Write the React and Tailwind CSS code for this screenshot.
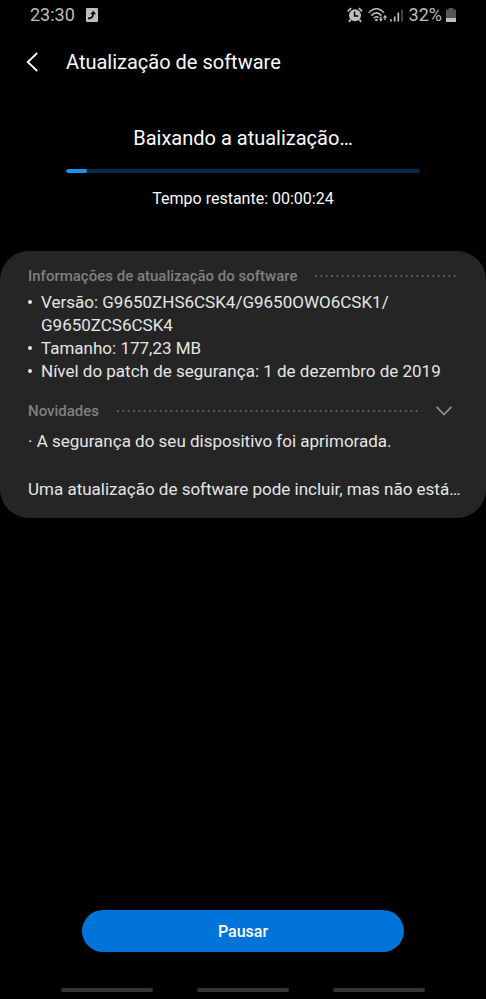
function DottedLine() {
  return (
    <svg className="h-1 min-w-0 flex-1 text-[#6c6c6c]" aria-hidden="true">
      <line x1="1" y1="2" x2="100%" y2="2" stroke="currentColor" strokeWidth="2" strokeLinecap="round" strokeDasharray="0 5.33" />
    </svg>
  );
}

function StatusBar() {
  return (
    <div className="flex h-[30px] items-center justify-between pr-[30px] pl-[30px] text-[#bdbdbd]">
      <div className="flex items-center gap-[11px]">
        <span className="text-[18px] leading-[30px]">23:30</span>
        <svg className="h-[14px] w-3" viewBox="0 0 12 14" aria-hidden="true">
          <rect width="12" height="14" rx="1" fill="currentColor" />
          <path d="M2 10.3H3.6Q7 10 7.2 5" fill="none" stroke="#000" strokeWidth="1.7" />
          <path d="M4.2 6.2L7.4 2.8L10.2 6.2Z" fill="#000" />
        </svg>
      </div>
      <div className="flex items-center">
        <svg className="h-4 w-4" viewBox="0 0 16 16" aria-hidden="true">
          <path d="M.8 4.4L4.2 1.2M15.2 4.4L11.8 1.2M3.8 12.6L1.8 14.8M12.2 12.6L14.2 14.8" stroke="currentColor" strokeWidth="1.8" />
          <circle cx="8" cy="8.2" r="6" fill="currentColor" />
          <path d="M7.6 4.4V9H11.2" fill="none" stroke="#000" strokeWidth="1.5" />
        </svg>
        <svg className="ml-[5px] h-4 w-[20px]" viewBox="0 0 20 16" fill="none" stroke="currentColor" aria-hidden="true">
          <path d="M.8 5.8Q8.4 -2.2 16 5.8M3.4 8.6Q8.4 3.2 13.4 8.6M5.9 11.2Q8.4 8.4 10.6 10.8" strokeWidth="1.6" />
          <circle cx="8.4" cy="13" r="1.3" fill="currentColor" stroke="none" />
          <path d="M12.9 9.5V13M17 13V9.5" strokeWidth="1.3" />
          <path d="M10.8 11.8H15L12.9 14.8ZM14.9 10.8H19.1L17 7.8Z" fill="currentColor" stroke="none" />
        </svg>
        <svg className="ml-[2px] h-4 w-[13px]" viewBox="0 0 13 16" aria-hidden="true">
          <path d="M1 12.2V14.6M4.7 9.4V14.6M8.3 5.6V14.6" stroke="currentColor" strokeWidth="1.7" />
          <path d="M12 2.4V14.6" stroke="#555555" strokeWidth="1.5" />
        </svg>
        <span className="ml-[6px] text-[18px] leading-[30px]">32%</span>
        <svg className="ml-1 h-[14px] w-[10px]" viewBox="0 0 10 14" aria-hidden="true">
          <path d="M0 1.4H2.6V0H7.4V1.4H10V10H0Z" fill="#555555" />
          <path d="M0 10H10V14H0Z" fill="currentColor" />
        </svg>
      </div>
    </div>
  );
}

function Detail({ children }) {
  return (
    <li className="flex gap-[9px]">
      <span className="mt-[9px] h-1 w-1 shrink-0 rounded-full bg-[#e4e4e4]" aria-hidden="true" />
      <span>{children}</span>
    </li>
  );
}

export default function App() {
  return (
    <div className="flex min-h-screen flex-col bg-black font-[Roboto,sans-serif] text-[#fafafa]">
      <StatusBar />

      <header className="flex h-16 items-center gap-6 px-6">
        <button type="button" aria-label="Voltar" className="flex h-5 w-[18px] items-center">
          <svg className="h-5 w-[18px]" viewBox="0 0 18 20" fill="none" stroke="currentColor" strokeWidth="1.9" aria-hidden="true">
            <path d="M13.2 1L3.8 10L13.2 19" />
          </svg>
        </button>
        <h1 className="text-[20px] leading-6">Atualização de software</h1>
      </header>

      <main className="flex flex-1 flex-col">
        <section className="flex flex-col items-center px-[66px] pt-8 pb-[41px]">
          <h2 className="text-[20px] leading-6">Baixando a atualização…</h2>
          <div role="progressbar" aria-valuenow={6} aria-valuemin={0} aria-valuemax={100} aria-label="Baixando a atualização" className="mt-[19px] h-1 w-full overflow-hidden rounded-full bg-[#06294a]">
            <div className="h-full w-[6%] rounded-full bg-[#1c92f0]" />
          </div>
          <p className="mt-[15px] text-[16px] leading-[22px]">Tempo restante: 00:00:24</p>
        </section>

        <section className="rounded-[29px] bg-[#252525] px-7 pt-[15px] pb-[17px] text-[17px] leading-6 text-[#e4e4e4]">
          <div className="flex h-5 items-center gap-[18px]">
            <h3 className="text-[15px] leading-5 font-medium text-[#808080]">Informações de atualização do software</h3>
            <DottedLine />
          </div>
          <ul className="mt-[5px] leading-[23px]">
            <Detail>Versão: G9650ZHS6CSK4/G9650OWO6CSK1/ G9650ZCS6CSK4</Detail>
            <Detail>Tamanho: 177,23 MB</Detail>
            <Detail>Nível do patch de segurança: 1 de dezembro de 2019</Detail>
          </ul>
          <div className="mt-[18px] flex h-5 items-center gap-[18px]">
            <h3 className="text-[15px] leading-5 font-medium text-[#808080]">Novidades</h3>
            <DottedLine />
            <button type="button" aria-label="Expandir novidades" className="mr-[6px] text-[#909090]">
              <svg className="h-[10px] w-4" viewBox="0 0 16 10" fill="none" stroke="currentColor" strokeWidth="1.8" aria-hidden="true">
                <path d="M.6 .8L8 8.5L15.4 .8" />
              </svg>
            </button>
          </div>
          <p className="mt-2">· A segurança do seu dispositivo foi aprimorada.</p>
          <p className="mt-6 -mr-3 truncate">Uma atualização de software pode incluir, mas não está…</p>
        </section>

        <div className="mt-auto px-[82px]">
          <button type="button" className="h-[42px] w-full rounded-full bg-[#0074d8] pt-[2px] text-[16px] leading-6 font-medium text-white">Pausar</button>
        </div>
      </main>

      <nav aria-label="Navegação do sistema" className="mt-9 flex justify-between px-[61px] pb-[7px]">
        <button type="button" aria-label="Recentes" className="h-1 w-[92px] rounded-full bg-[#353535]" />
        <button type="button" aria-label="Início" className="h-1 w-[92px] rounded-full bg-[#353535]" />
        <button type="button" aria-label="Retroceder" className="h-1 w-[92px] rounded-full bg-[#353535]" />
      </nav>
    </div>
  );
}
